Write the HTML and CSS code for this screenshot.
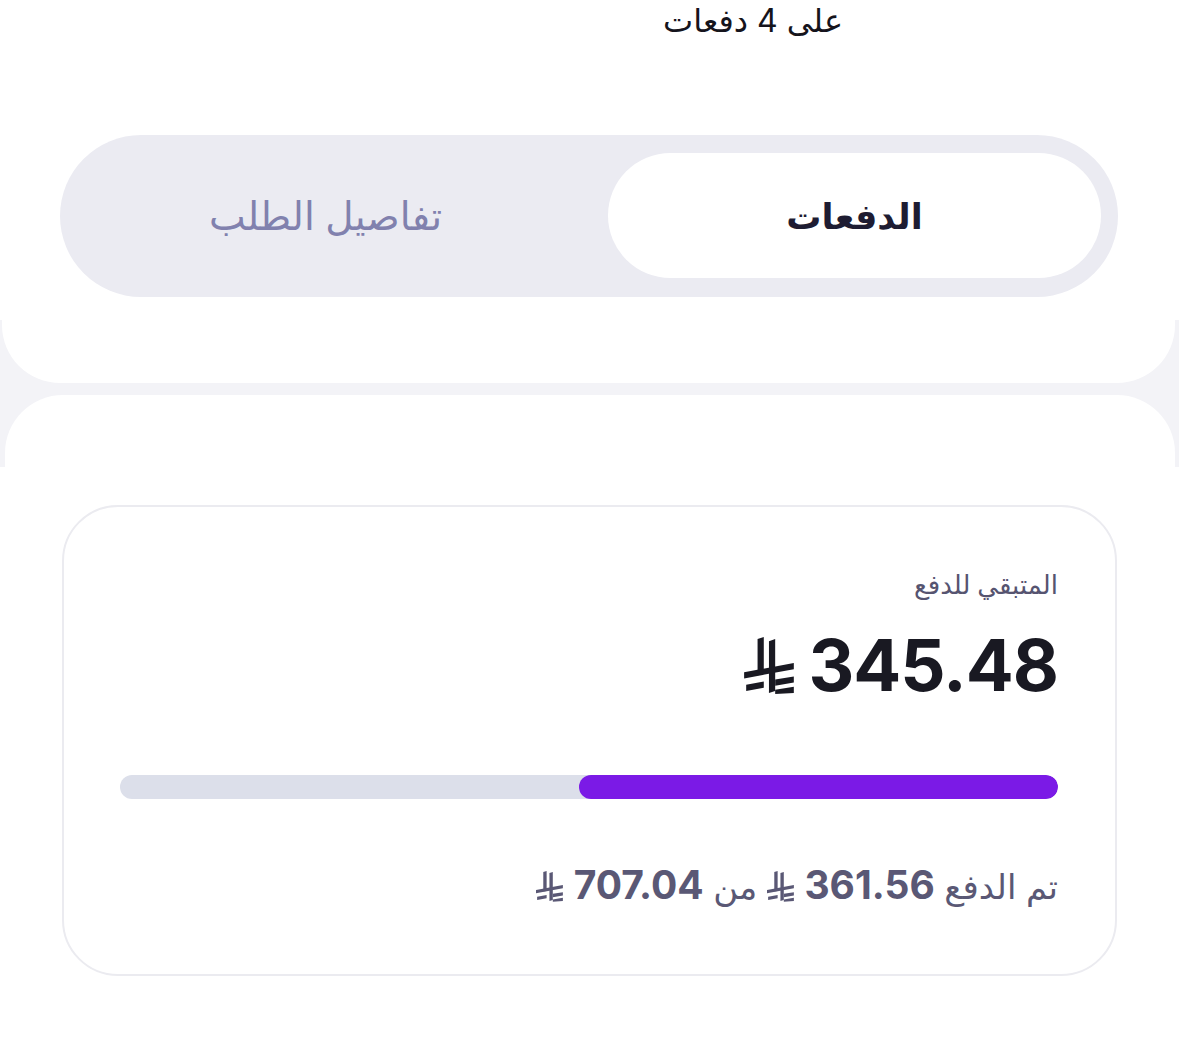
FILE: index.html
```html
<!DOCTYPE html>
<html lang="ar" dir="rtl">
  <head>
    <meta charset="utf-8">
    <meta name="viewport" content="width=device-width, initial-scale=1.0">
    <title>الدفعات</title>
    <link rel="stylesheet" href="styles.css">
  </head>
  <body>
    <div class="band">
      <div class="top">
        <div class="plan-title">على 4 دفعات</div>
        <div class="tabs">
          <div class="tab active">الدفعات</div>
          <div class="tab">تفاصيل الطلب</div>
        </div>
      </div>
      <div class="sheet-head"></div>
    </div>

    <div class="content">
      <div class="pay-card">
        <div class="label">المتبقي للدفع</div>
        <div class="amount">
          <span class="num">345.48</span>
          <svg class="sar" viewBox="0 0 50 56"><use href="#riyal"/></svg>
        </div>
        <div class="progress">
          <div class="fill" style="width: 51.1%"></div>
        </div>
        <div class="paid">
          تم الدفع <b class="num">361.56</b>
          <svg class="sar small" viewBox="0 0 50 56"><use href="#riyal"/></svg>
          من <b class="num">707.04</b>
          <svg class="sar small" viewBox="0 0 50 56"><use href="#riyal"/></svg>
        </div>
      </div>
    </div>

    <svg width="0" height="0" class="defs">
      <defs>
        <g id="riyal" fill="currentColor">
          <!-- left stem -->
          <polygon points="13,3 19,1 19,37 13,38"/>
          <!-- right stem -->
          <polygon points="24,5 30,3 30,53 24,55"/>
          <!-- long bar -->
          <polygon points="0,35 48,26 48,32 0,41"/>
          <!-- lower bars -->
          <polygon points="2,47 19,44 19,50 2,53"/>
          <polygon points="30,42 48,39 48,45 30,48"/>
          <polygon points="30,52 48,49 48,55 30,56"/>
        </g>
      </defs>
    </svg>
  </body>
</html>
```

FILE: styles.css
```css
body {
    margin: 0;
    background-color: #fff;
    font-family: "Inter", "DejaVu Sans", sans-serif;
    color: #1c1b26;
}

.defs {
    position: absolute;
}

.band {
    background: linear-gradient(#fff 320px, #f3f3f7 320px);
    overflow: hidden;
}

.top {
    background-color: #fff;
    height: 383px;
    margin: 0 4px 0 2px;
    border-radius: 0 0 58px 58px;
}

.plan-title {
    padding-right: 332px;
    padding-top: 1px;
    font-size: 32px;
    line-height: 40px;
    color: #15141c;
}

.tabs {
    display: flex;
    margin: 94px 57px 0 58px;
    padding: 18px 17px 19px 17px;
    background-color: #ebebf2;
    border-radius: 81px;
}

.tab {
    flex: 1;
    height: 125px;
    display: flex;
    align-items: center;
    justify-content: center;
    padding-right: 34px;
    font-size: 39px;
    font-weight: 500;
    color: #8181ae;
}

.tab.active {
    flex: 0 0 493px;
    padding-right: 0;
    background-color: #fff;
    border-radius: 63px;
    font-size: 35px;
    color: #1e1c32;
    font-weight: bold;
}

.sheet-head {
    height: 72px;
    margin: 12px 4px 0 5px;
    background-color: #fff;
    border-radius: 58px 58px 0 0;
}

.content {
    padding: 38px 62px 60px 62px;
}

.pay-card {
    box-sizing: border-box;
    height: 471px;
    border: 2px solid #ebebf0;
    border-radius: 56px;
    padding: 60px 57px 0 56px;
}

.label {
    font-size: 26px;
    line-height: 36px;
    color: #565470;
    font-weight: 500;
}

.amount {
    display: flex;
    align-items: center;
    gap: 12px;
    margin-top: 23px;
    font-size: 71px;
    line-height: 78px;
    font-weight: 700;
    letter-spacing: -1px;
    color: #191922;
}

.num {
    direction: ltr;
    unicode-bidi: isolate;
    font-family: "Inter", sans-serif;
}

.sar {
    width: 52px;
    height: 58px;
    color: #191922;
}

.progress {
    margin-top: 71px;
    height: 24px;
    border-radius: 12px;
    background-color: #dcdfea;
    overflow: hidden;
}

.fill {
    height: 100%;
    background-color: #7b1ae6;
    border-radius: 12px;
}

.paid {
    margin-top: 64px;
    font-size: 34px;
    line-height: 44px;
    color: #5a5875;
}

.paid b {
    font-size: 39px;
    font-weight: 700;
}

.sar.small {
    width: 28px;
    height: 32px;
    color: #5a5875;
    vertical-align: -3px;
}
```
